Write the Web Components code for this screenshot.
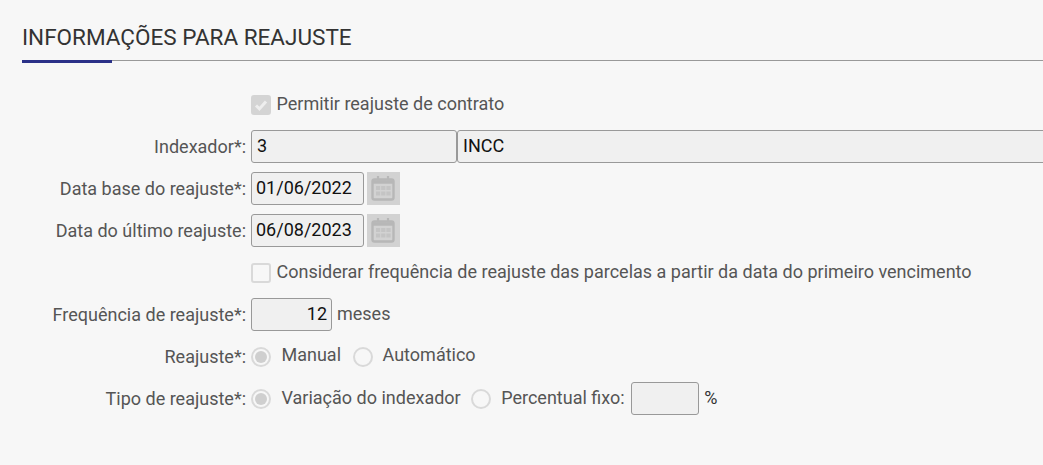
<!DOCTYPE html>
<html><head><meta charset="utf-8"><style>
html,body{margin:0;padding:0;background:#f7f7f7;overflow:hidden}
body{width:1043px;height:465px;font:18px Roboto,sans-serif;color:#555}
</style></head><body>
<template id="t-section"><style>
:host{display:block;padding:22px 0 0 22px}
h2{margin:0;font:400 22.5px/30px Roboto,sans-serif;color:#333;height:38px;border-bottom:1px solid #999;position:relative}
h2::after{content:"";position:absolute;left:0;bottom:-3px;width:90px;height:3px;background:#2b3188}
.body{padding-top:33px}
</style><h2><slot name="title"></slot></h2><div class="body"><slot></slot></div></template>

<template id="t-row"><style>
:host{display:grid;grid-template-columns:224px 1fr;column-gap:5px;align-items:center;height:var(--h,33px);margin-top:var(--mt,0)}
.l{text-align:right;white-space:nowrap;color:#555}
.c{display:flex;align-items:center;min-width:0}
</style><div class="l"><slot name="label"></slot></div><div class="c"><slot></slot></div></template>

<template id="t-input"><style>
:host{display:block;box-sizing:border-box;height:33px;flex:none;background:#f0f0f0;border:1px solid #999;border-radius:3px;font:18px/30px Roboto,sans-serif;color:#111;padding:0 4px 0 var(--pl,5px);white-space:nowrap;overflow:hidden}
:host([right]){text-align:right}
</style><slot></slot></template>

<template id="t-check"><style>
:host{display:flex;align-items:center;gap:5.5px;white-space:nowrap;color:#555}
.b{box-sizing:border-box;width:20px;height:20px;border-radius:3px;border:2px solid #d9d9d9;background:#f7f7f7;display:flex;flex:none}
:host([checked]) .b{background:#d4d4d4;border-color:#d4d4d4}
svg{display:none;width:16px;height:16px}
:host([checked]) svg{display:block}
.t{position:relative;top:-1px}
</style><span class="b"><svg viewBox="0 0 16 16"><path d="M3 8.5l3.4 3.4L13 4.4" fill="none" stroke="#eeeeee" stroke-width="3"/></svg></span><span class="t"><slot></slot></span></template>

<template id="t-radio"><style>
:host{display:flex;align-items:center;gap:10px;white-space:nowrap;color:#555;flex:none}
:host([checked]){gap:10.5px}
.r{box-sizing:border-box;width:20px;height:20px;border-radius:50%;border:2px solid #d9d9d9;background:#f7f7f7;display:flex;align-items:center;justify-content:center;flex:none}
:host([checked]) .r::after{content:"";width:12px;height:12px;border-radius:50%;background:#cfcfcf}
.t{position:relative;top:var(--t,-1px)}
</style><span class="r"></span><span class="t"><slot></slot></span></template>

<template id="t-cal"><style>
:host{display:block;width:33px;height:33px;margin-left:3px;flex:none;background:#d2d2d2}
svg{display:block}
g{filter:blur(.35px)}
</style><svg width="33" height="33" viewBox="0 0 33 33"><g><g fill="none" stroke="#b7b7b7"><rect x="5.5" y="7.5" width="21" height="20" rx="2" stroke-width="2.4"/><path d="M6 10h20" stroke-width="3.5"/><path d="M11 4v4.5M21 4v4.5" stroke-width="2.2"/></g><g fill="#c4c4c4"><rect x="9" y="14" width="4.2" height="4"/><rect x="14.2" y="14" width="4.2" height="4"/><rect x="19.4" y="14" width="4.2" height="4"/><rect x="9" y="19.5" width="4.2" height="4"/><rect x="14.2" y="19.5" width="4.2" height="4"/><rect x="19.4" y="19.5" width="4.2" height="4"/></g></g></svg></template>

<x-section>
  <span slot="title">INFORMAÇÕES PARA REAJUSTE</span>
  <x-row style="--h:20px">
    <x-check checked>Permitir reajuste de contrato</x-check>
  </x-row>
  <x-row style="--mt:16px">
    <span slot="label">Indexador*:</span>
    <x-input style="width:206px">3</x-input>
    <x-input style="width:600px">INCC</x-input>
  </x-row>
  <x-row style="--mt:9px;--pl:4px">
    <span slot="label">Data base do reajuste*:</span>
    <x-input style="width:113px">01/06/2022</x-input><x-cal></x-cal>
  </x-row>
  <x-row style="--mt:9px;--pl:4px">
    <span slot="label">Data do último reajuste:</span>
    <x-input style="width:113px">06/08/2023</x-input><x-cal></x-cal>
  </x-row>
  <x-row style="--h:20px;--mt:15px">
    <x-check>Considerar frequência de reajuste das parcelas a partir da data do primeiro vencimento</x-check>
  </x-row>
  <x-row style="--mt:16px">
    <span slot="label">Frequência de reajuste*:</span>
    <x-input right style="width:81px">12</x-input><span style="margin-left:5px;position:relative;top:-1px">meses</span>
  </x-row>
  <x-row style="--h:20px;--mt:15px;--t:-2px">
    <span slot="label">Reajuste*:</span>
    <x-radio checked>Manual</x-radio><x-radio style="margin-left:11.5px">Automático</x-radio>
  </x-row>
  <x-row style="--mt:16px">
    <span slot="label">Tipo de reajuste*:</span>
    <x-radio checked>Variação do indexador</x-radio><x-radio style="margin-left:10.5px">Percentual fixo:</x-radio>
    <x-input style="width:68px;margin-left:6.5px"></x-input><span style="margin-left:5px;color:#333;position:relative;top:-1px">%</span>
  </x-row>
</x-section>
<script>
for(const [n,id] of [['x-section','t-section'],['x-row','t-row'],['x-input','t-input'],['x-check','t-check'],['x-radio','t-radio'],['x-cal','t-cal']]){
  customElements.define(n,class extends HTMLElement{constructor(){super();this.attachShadow({mode:'open'}).appendChild(document.getElementById(id).content.cloneNode(true))}});
}
</script>
</body></html>
